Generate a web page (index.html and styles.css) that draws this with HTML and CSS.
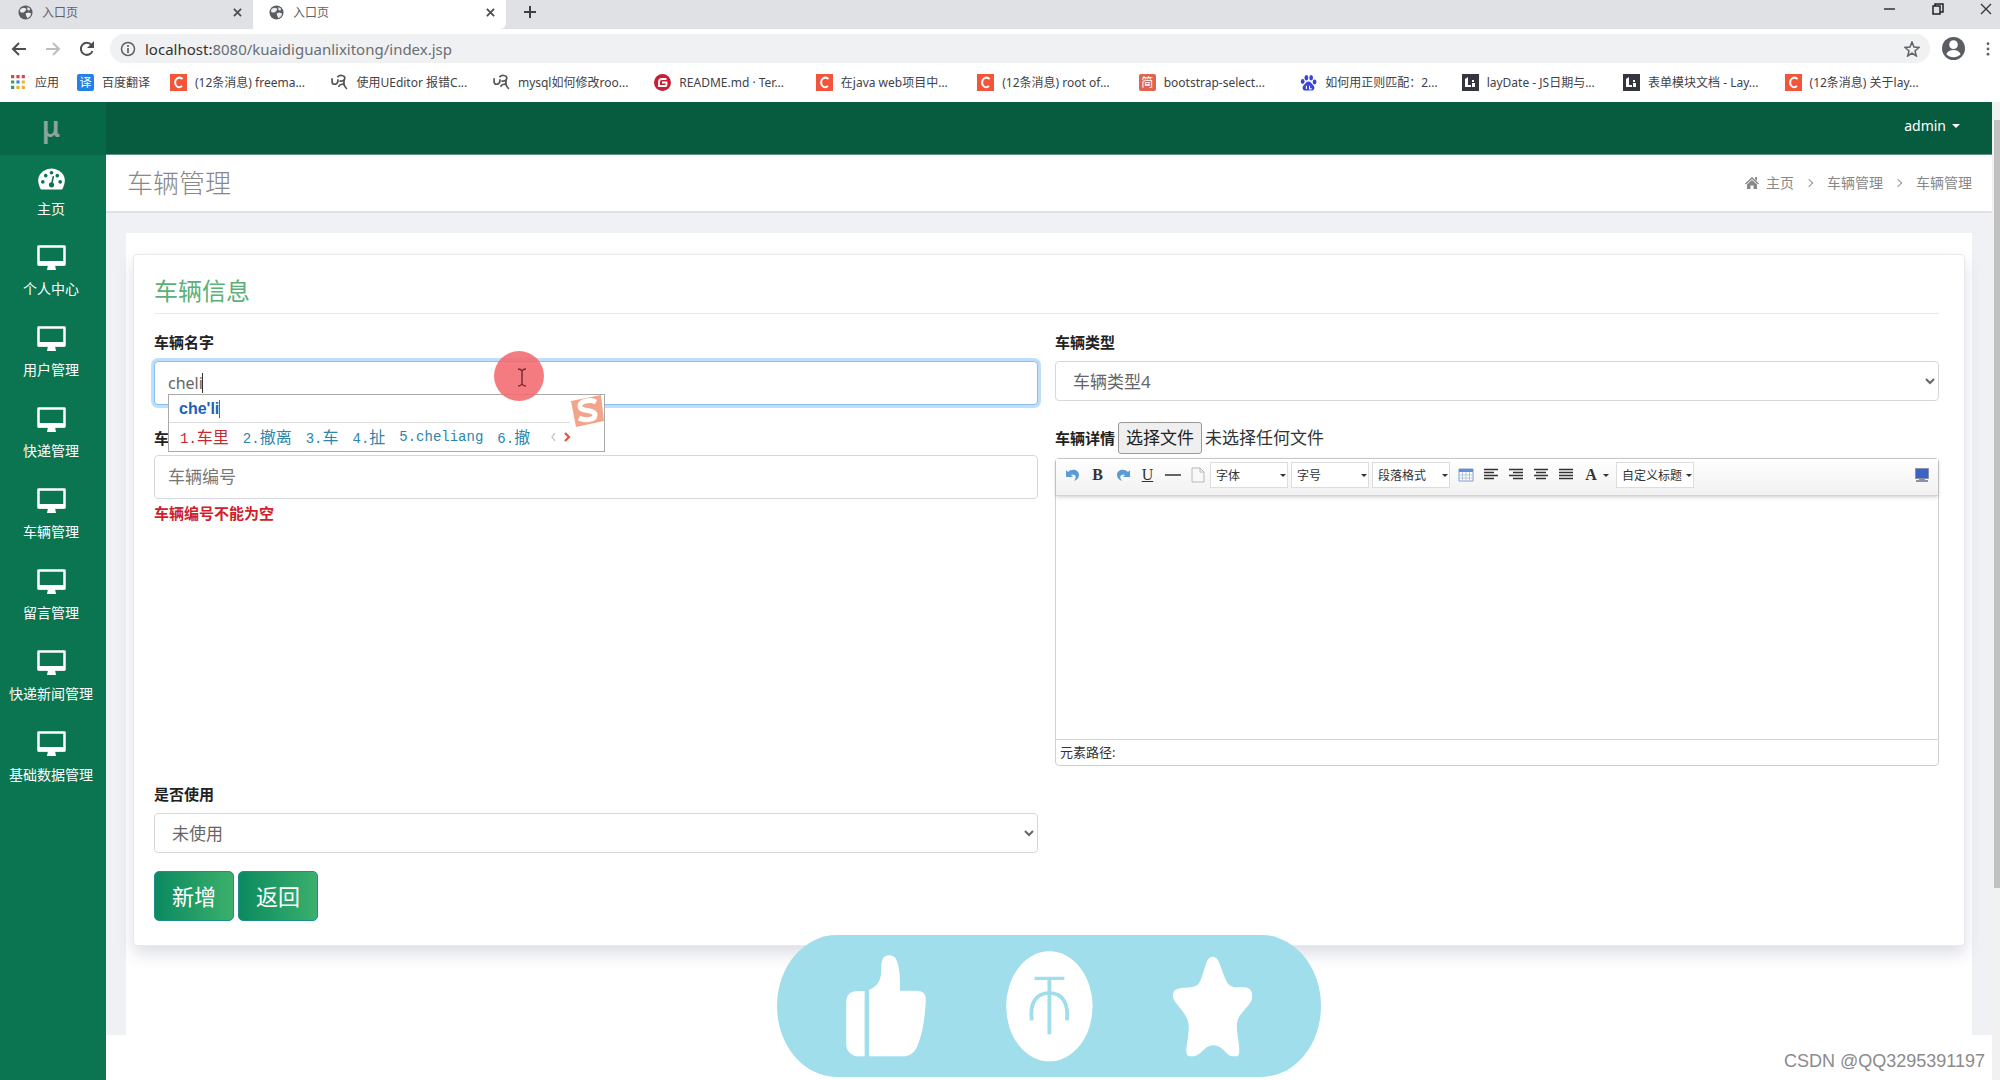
FILE: index.html
```
<!DOCTYPE html>
<html lang="zh-CN">
<head>
<meta charset="utf-8">
<title>入口页</title>
<link rel="stylesheet" href="styles.css">
</head>
<body>
<svg class="defs" aria-hidden="true">
  <symbol id="globe" viewBox="0 0 16 16"><circle cx="8" cy="8" r="7.5" fill="#5a5d61"/><path d="M3 4 6 3 9 4 8 6 6 8 3 8 2 6zM8 9l3-1 3 1-1 3-3 2-1-2zM10 2l3 2-1 2-2-1z" fill="#eee"/></symbol>
  <symbol id="x" viewBox="0 0 10 10"><path d="M1 1 9 9M9 1 1 9" stroke="#4b4e52" stroke-width="2"/></symbol>
  <symbol id="csdn" viewBox="0 0 17 17"><path fill="#f2553a" d="M0 0h17v17H0z"/><path d="M12.500 5C11 3.500 8.500 3.500 7 4.500 4.500 6 4.500 11 7 12.500c1.500 1 3.500.8 5-.5" fill="none" stroke="#fff" stroke-width="2"/></symbol>
  <symbol id="ua" viewBox="0 0 16 16"><path d="M1 4v3c0 3.500 4.500 3.500 5.500 0V5M6 3c2-2.500 7-2 7 1 0 2.500-3 3-5 2.500M12.500 5c-1 4 0 7 2.500 9M7 12c2-3 4.500-3 6-1" fill="none" stroke="#555" stroke-width="1.600"/></symbol>
  <symbol id="lay" viewBox="0 0 17 17"><path fill="#34363d" d="M0 0h17v17H0z"/><path d="M3 5l3-2v8h3v2H3zM10 6h2v2h-2zM10 9h3v4h-3z" fill="#fff"/></symbol>
  <symbol id="monitor" viewBox="0 0 29 25"><path d="M1.500 1.500h26v18h-26z" fill="none" stroke="#fff" stroke-width="2.500" stroke-linejoin="round"/><path d="M1 16h27v4.500H1zM11 20h7l1 5h-9z" fill="#fff"/></symbol>
  <symbol id="undo" viewBox="0 0 16 16"><path d="M1 3l2 2c4-4 11-2 11 3 0 3-2 5-5 6 3-4 2-7-3-6l2 2H1z" fill="#5b9bd5"/></symbol>
</svg>

<div class="tabs">
  <div class="tab"><svg><use href="#globe"/></svg><span>入口页</span><button aria-label="关闭"><svg><use href="#x"/></svg></button></div>
  <div class="tab active"><svg><use href="#globe"/></svg><span>入口页</span><button aria-label="关闭"><svg><use href="#x"/></svg></button></div>
  <button class="newtab" aria-label="新标签页"><svg viewBox="0 0 12 12"><path d="M6 0v12M0 6h12" stroke="#3c4043" stroke-width="2"/></svg></button>
  <div class="winctl">
    <button aria-label="最小化"><svg viewBox="0 0 12 12"><path d="M0 6h11" stroke="#333" stroke-width="1.500"/></svg></button>
    <button aria-label="还原"><svg viewBox="0 0 12 12"><path d="M1 3h7v8H1zM3 3V1h8v8H8" fill="none" stroke="#222" stroke-width="1.500"/></svg></button>
    <button aria-label="关闭窗口"><svg viewBox="0 0 12 12"><path d="M1 1l10 10M11 1 1 11" stroke="#333" stroke-width="1.300"/></svg></button>
  </div>
</div>

<div class="toolbar">
  <button aria-label="后退"><svg viewBox="0 0 16 16"><path d="M15 8H2M8 2 2 8l6 6" fill="none" stroke="#4b4e52" stroke-width="2"/></svg></button>
  <button aria-label="前进"><svg viewBox="0 0 16 16"><path d="M1 8h13M8 2l6 6-6 6" fill="none" stroke="#bcbec1" stroke-width="2"/></svg></button>
  <button aria-label="刷新"><svg viewBox="0 0 16 16"><path d="M13.500 10A6 6 0 1 1 12.500 4" fill="none" stroke="#4b4e52" stroke-width="2"/><path d="M15 0v7H8z" fill="#4b4e52"/></svg></button>
  <div class="omnibox">
    <svg viewBox="0 0 16 16"><circle cx="8" cy="8" r="6.500" fill="none" stroke="#5f6368" stroke-width="1.500"/><path d="M8 7v5M8 4v2" stroke="#5f6368" stroke-width="1.700"/></svg>
    <span><b>localhost:</b>8080/kuaidiguanlixitong/index.jsp</span>
    <svg class="fav" viewBox="0 0 16 16"><path d="M8 1l2 5 5 .5-4 3.500 1.300 5L8 12.200 3.700 15 5 10 1 6.500 6 6z" fill="none" stroke="#5f6368" stroke-width="1.500"/></svg>
  </div>
  <svg class="avatar" viewBox="0 0 24 24"><circle cx="12" cy="12" r="12" fill="#5a5d61"/><circle cx="12" cy="8" r="4.500" fill="#fff"/><path d="M4.500 18c2-6 13-6 15 0-4 4-11 4-15 0z" fill="#fff"/></svg>
  <svg class="dots" viewBox="0 0 4 16"><circle cx="2" cy="2" r="1.600"/><circle cx="2" cy="8" r="1.600"/><circle cx="2" cy="14" r="1.600"/></svg>
</div>

<nav class="bookmarks">
  <a href="#" class="apps"><svg viewBox="0 0 16 16"><path fill="#d9463e" d="M1 1h3v3H1zM6 1h3v3H6zM11 1h3v3h-3z"/><path fill="#3b9a5a" d="M1 6h3v3H1zM1 11h3v3H1z"/><path fill="#4284e8" d="M6 6h3v3H6z"/><path fill="#eab331" d="M11 6h3v3h-3zM6 11h3v3H6zM11 11h3v3h-3z"/></svg>应用</a>
  <a href="#" class="trans"><i class="badge blue">译</i>百度翻译</a>
  <a href="#"><svg><use href="#csdn"/></svg>(12条消息) freema...</a>
  <a href="#"><svg><use href="#ua"/></svg>使用UEditor 报错C...</a>
  <a href="#"><svg><use href="#ua"/></svg>mysql如何修改roo...</a>
  <a href="#"><svg viewBox="0 0 17 17"><circle cx="8.500" cy="8.500" r="8.500" fill="#c71d37"/><path d="M12.500 5H8C6 5 5 6 5 8v4h6.500c.7 0 1-.5 1-1V8.500H8" fill="none" stroke="#fff" stroke-width="1.800"/></svg>README.md · Ter...</a>
  <a href="#"><svg><use href="#csdn"/></svg>在java web项目中...</a>
  <a href="#"><svg><use href="#csdn"/></svg>(12条消息) root of...</a>
  <a href="#"><i class="badge red">简</i>bootstrap-select...</a>
  <a href="#"><svg viewBox="0 0 16 16" fill="#3a45d8"><ellipse cx="2.500" cy="7" rx="1.800" ry="2.300"/><ellipse cx="6" cy="3.500" rx="1.800" ry="2.500"/><ellipse cx="10.500" cy="3.500" rx="1.800" ry="2.500"/><ellipse cx="13.700" cy="7.500" rx="1.800" ry="2.300"/><path d="M8 7c2 0 3 2 4.500 3.500 2 2 1 5-1.500 5H5c-2.500 0-3.500-3-1.500-5C5 9 6 7 8 7z"/><path d="M6 11v3M9 11v3h2" stroke="#fff" fill="none"/></svg>如何用正则匹配：2...</a>
  <a href="#"><svg><use href="#lay"/></svg>layDate - JS日期与...</a>
  <a href="#"><svg><use href="#lay"/></svg>表单模块文档 - Lay...</a>
  <a href="#"><svg><use href="#csdn"/></svg>(12条消息) 关于lay...</a>
</nav>

<div class="app">
  <aside class="side">
    <div class="logo">μ</div>
    <a href="#" class="home"><svg viewBox="0 0 28 22"><path d="M3 22C-6 5 9 0 14 0s20 5 11 22z" fill="#fff"/><g fill="#0b7551"><circle cx="5" cy="14" r="1.900"/><circle cx="8" cy="7.500" r="1.900"/><circle cx="14" cy="4.500" r="1.900"/><circle cx="20" cy="7.500" r="1.900"/><circle cx="23" cy="14" r="1.900"/><circle cx="14" cy="17" r="2.700"/></g><path d="M14 17l2-9" stroke="#0b7551" stroke-width="1.600"/></svg>主页</a>
    <a href="#"><svg><use href="#monitor"/></svg>个人中心</a>
    <a href="#"><svg><use href="#monitor"/></svg>用户管理</a>
    <a href="#"><svg><use href="#monitor"/></svg>快递管理</a>
    <a href="#"><svg><use href="#monitor"/></svg>车辆管理</a>
    <a href="#"><svg><use href="#monitor"/></svg>留言管理</a>
    <a href="#"><svg><use href="#monitor"/></svg>快递新闻管理</a>
    <a href="#"><svg><use href="#monitor"/></svg>基础数据管理</a>
  </aside>

  <main class="main">
    <header class="topbar"><button class="user">admin<i class="caret"></i></button></header>
    <div class="titlebar">
      <h1>车辆管理</h1>
      <nav class="crumbs">
        <a href="#"><svg viewBox="0 0 14 12"><path d="M7 0l7 6.500-1 1L7 2 1 7.500l-1-1zM2 7.500 7 3l5 4.500V12H8.500V8.500h-3V12H2zM10 0h2v4l-2-2z" fill="#888"/></svg>主页</a>
        <i></i><a href="#">车辆管理</a><i></i><span>车辆管理</span>
      </nav>
    </div>
    <div class="page">
      <div class="sheet">
        <form class="card">
          <h2>车辆信息</h2>
          <div class="grid">
            <div class="field">
              <label for="name">车辆名字</label>
              <div class="anchor">
                <input id="name" class="box focus" type="text" value="cheli">
                <i class="textcaret"></i>
                <div class="ime">
                  <div class="pinyin">che'li<i></i></div>
                  <div class="cands"><span class="on">1.<b>车里</b></span><span>2.<b>撤离</b></span><span>3.<b>车</b></span><span>4.<b>扯</b></span><span>5.cheliang</span><span>6.<b>撤</b></span><svg viewBox="0 0 22 12"><path d="M5 2 2 6l3 4" fill="none" stroke="#ccc" stroke-width="1.500"/><path d="m15 2 4 4-4 4" fill="none" stroke="#e0573a" stroke-width="2.200"/></svg></div>
                  <svg class="sogou" viewBox="0 0 34 32"><path d="M1 6 31 0l3 26-28 6z" fill="#f3a58b"/><path d="M26 7C20 4 9 6 10 12c1 5 15 2 15 8 0 5-10 6-16 3" fill="none" stroke="#fff" stroke-width="5"/></svg>
                </div>
                <svg class="pointer" viewBox="0 0 50 50"><circle cx="25" cy="25" r="25" fill="#f26a6e" fill-opacity=".88"/><path d="M24 18q3 0 4 2 1-2 4-2M28 20v13M24 35q3 0 4-2 1 2 4 2" fill="none" stroke="#7b2b36" stroke-width="1.500"/></svg>
              </div>
            </div>
            <div class="field">
              <label for="type">车辆类型</label>
              <select id="type" class="box"><option>车辆类型4</option></select>
            </div>
            <div class="field tall">
              <label for="no">车辆编号</label>
              <input id="no" class="box" type="text" placeholder="车辆编号">
              <p class="error">车辆编号不能为空</p>
            </div>
            <div class="field tall">
              <div class="filerow"><label for="file">车辆详情</label><label class="pick" for="file">选择文件</label><input id="file" type="file"><span>未选择任何文件</span></div>
              <div class="editor">
                <div class="tools">
                  <button type="button" aria-label="撤销"><svg><use href="#undo"/></svg></button>
                  <button type="button"><b>B</b></button>
                  <button type="button" aria-label="重做"><svg class="flip"><use href="#undo"/></svg></button>
                  <button type="button"><u>U</u></button>
                  <button type="button" aria-label="分隔线"><svg viewBox="0 0 16 16"><path d="M0 8h16" stroke="#333" stroke-width="1.500"/></svg></button>
                  <button type="button" aria-label="清空"><svg viewBox="0 0 16 16"><path d="M2 1h8l4 4v10H2zM10 1v4h4" fill="#f8f8f8" stroke="#b8b8b8"/></svg></button>
                  <button type="button" class="combo"><span>字体</span><i class="caret"></i></button>
                  <button type="button" class="combo"><span>字号</span><i class="caret"></i></button>
                  <button type="button" class="combo"><span>段落格式</span><i class="caret"></i></button>
                  <button type="button" aria-label="表格"><svg viewBox="0 0 16 16"><path d="M1 2h14v12H1z" fill="#fff" stroke="#7f9fce"/><path d="M1 2h14v3H1z" fill="#5f8fd6"/><path d="M1 8h14M1 11h14M4.500 5v9M8 5v9M11.500 5v9" stroke="#b4c5e0"/></svg></button>
                  <button type="button" aria-label="左对齐"><svg viewBox="0 0 16 16"><path d="M1 2.500h14M1 5.500h10M1 8.500h14M1 11.500h10" stroke="#333" stroke-width="1.300"/></svg></button>
                  <button type="button" aria-label="右对齐"><svg viewBox="0 0 16 16"><path d="M1 2.500h14M5 5.500h10M1 8.500h14M5 11.500h10" stroke="#333" stroke-width="1.300"/></svg></button>
                  <button type="button" aria-label="居中"><svg viewBox="0 0 16 16"><path d="M1 2.500h14M3 5.500h10M1 8.500h14M3 11.500h10" stroke="#333" stroke-width="1.300"/></svg></button>
                  <button type="button" aria-label="两端对齐"><svg viewBox="0 0 16 16"><path d="M1 2.500h14M1 5.500h14M1 8.500h14M1 11.500h14" stroke="#333" stroke-width="1.300"/></svg></button>
                  <button type="button" class="color"><b>A</b><i class="caret"></i></button>
                  <button type="button" class="combo"><span>自定义标题</span><i class="caret"></i></button>
                  <button type="button" class="full" aria-label="全屏"><svg viewBox="0 0 16 16"><path d="M1.500 1.500h13v10h-13z" fill="#3a62c8" stroke="#8a93a5"/><path d="M5 12h6v1h3v2H2v-2h3z" fill="#8a93a5"/></svg></button>
                </div>
                <div class="canvas" contenteditable="true" spellcheck="false"></div>
                <div class="path">元素路径:</div>
              </div>
            </div>
            <div class="field">
              <label for="used">是否使用</label>
              <select id="used" class="box"><option>未使用</option></select>
            </div>
          </div>
          <div class="actions"><button type="button">新增</button><button type="button">返回</button></div>
        </form>
      </div>
    </div>
    <div class="watermark">CSDN @QQ3295391197</div>
  </main>
  <div class="scroll"><i></i></div>
</div>

<svg class="pill" viewBox="45 104 1422 426" preserveAspectRatio="none">
  <rect x="45" y="104" width="1422" height="426" rx="156" ry="213" fill="#a0deec"/>
  <g fill="#fff">
    <path d="M274 272v196h-22c-14-3-26-18-26-36V304c0-20 12-32 30-32z"/>
    <path d="M286 268c22-8 30-30 31-50 1-14 0-30 4-42 7-15 28-14 35 0 8 18 12 50 10 95h43c16 0 25 8 25 26-2 55-8 100-20 134-8 24-18 34-34 37h-94z"/>
    <ellipse cx="757" cy="318" rx="113" ry="165"/>
    <path d="M1170 180c7-14 21-14 28 0 8 18 12 40 20 58 6 16 14 22 28 23h22c14 2 20 12 19 28 0 16-12 28-22 42-12 16-18 26-18 48 0 26 8 52 6 78-1 8-3 11-8 11h-10c-10-1-16-12-26-22-14-15-32-15-46 0-10 10-18 20-27 22h-12c-6-1-9-6-9-16 0-20 8-52 6-78-1-18-10-32-20-48-10-14-20-24-21-38 0-12 2-20 14-23 16-4 38-2 49-10 12-8 18-52 27-75z"/>
  </g>
  <path d="M718 234h78M757 234v168M711 360c-6-50 10-82 46-82s50 32 46 82" fill="none" stroke="#a0deec" stroke-width="10"/>
</svg>
</body>
</html>
```
FILE: styles.css
```
* { box-sizing: border-box; }
html { overflow: hidden; }
body {
  margin: 0;
  min-height: 100vh;
  display: flex;
  flex-direction: column;
  font: 14px/20px "Noto Sans", "Noto Sans CJK SC", sans-serif;
  color: #333;
  background: #fff;
}
button { border: 0; padding: 0; background: none; font: inherit; color: inherit; display: flex; align-items: center; justify-content: center; }
a { color: inherit; text-decoration: none; }
i { font-style: normal; }
h1, h2, p { margin: 0; }
svg { flex: none; display: block; }
.defs { display: none; }
.caret { border: 4px solid transparent; border-top-color: currentColor; border-bottom: 0; }

/* browser frame */
.tabs { display: flex; height: 29px; background: #dfe1e5; }
.tab { width: 253px; display: flex; align-items: center; gap: 9px; padding: 0 11px 4px 18px; font-size: 12px; color: #5f6368; }
.tab.active { background: #fff; border-radius: 0 0 6px 0; padding-left: 16px; }
.tab svg { width: 15px; height: 15px; }
.tab button { margin-left: auto; }
.tab button svg { width: 9px; height: 9px; }
.newtab { margin-left: 18px; padding-bottom: 6px; }
.newtab svg { width: 12px; height: 12px; }
.winctl { margin-left: auto; display: flex; gap: 36px; padding: 0 8px 11px 0; }
.winctl svg { width: 12px; height: 12px; }
.toolbar { display: flex; align-items: center; height: 39px; padding: 0 10px 0 11px; gap: 18px; }
.toolbar button svg { width: 16px; height: 16px; }
.omnibox { flex: 1; height: 29px; border-radius: 15px; background: #eff1f3; display: flex; align-items: center; gap: 9px; padding: 0 10px; margin-left: -3px; font-size: 15px; color: #6b6e72; }
.omnibox svg { width: 16px; height: 16px; }
.omnibox b { font-weight: 400; color: #333; }
.omnibox .fav { margin-left: auto; }
.avatar { width: 23px; height: 23px; margin: 0 3px 0 -6px; }
.dots { width: 4px; height: 14px; fill: #5f6368; }
.bookmarks { display: flex; height: 34px; padding: 0 54px 5px 10px; font-size: 12px; color: #3f4246; }
.bookmarks a { flex: 1 1 0; min-width: 0; display: flex; align-items: center; gap: 8px; white-space: nowrap; }
.bookmarks .apps { flex: 0 0 67px; }
.bookmarks .trans { flex: 0 0 93px; }
.bookmarks svg { width: 17px; height: 17px; }
.badge { width: 17px; height: 17px; border-radius: 2px; color: #fff; text-align: center; line-height: 17px; }
.blue { background: #2482e6; }
.red { background: #e0644f; }

/* application */
.app { flex: 1; display: flex; }
.side { width: 106px; background: #0b7551; color: #fff; padding-right: 4px; }
.logo { height: 53px; margin-right: -4px; padding-right: 4px; background: #076848; color: #8fa399; font-size: 28px; font-weight: 600; line-height: 48px; text-align: center; }
.side a { display: flex; flex-direction: column; align-items: center; gap: 9px; height: 81px; padding-top: 9px; white-space: nowrap; }
.side a.home { padding-top: 13px; }
.side svg { width: 29px; height: 25px; }
.side .home svg { height: 22px; width: 27px; }
.main { flex: 1; min-width: 0; display: flex; flex-direction: column; }
.topbar { height: 53px; background: #075c40; border-bottom: 1px solid #5f9581; color: #fff; display: flex; justify-content: flex-end; padding: 0 32px 5px 0; }
.user { gap: 6px; }
.titlebar { height: 58px; display: flex; align-items: center; justify-content: space-between; padding: 0 20px 0 21px; border-bottom: 2px solid #dfe1e4; color: #888; }
.titlebar h1 { font-size: 26px; line-height: 36px; font-weight: 300; }
.crumbs { display: flex; align-items: center; }
.crumbs a { display: flex; align-items: center; gap: 7px; }
.crumbs svg { width: 14px; height: 12px; }
.crumbs i { width: 6px; height: 6px; margin: 0 15px 0 12px; border: solid #999; border-width: 1px 1px 0 0; transform: rotate(45deg); }
.page { flex: 1; background: #f0f1f4; padding: 20px 20px 0; }
.sheet { height: 100%; background: #fff; padding: 21px 7px 0; }
.card { border: 1px solid #e8e9ec; border-radius: 4px; background: #fff; box-shadow: 0 8px 16px rgba(70, 80, 120, .18); padding: 20px 25px 24px 20px; }
.card h2 { font-size: 24px; line-height: 32px; font-weight: 400; color: #5cb078; padding-bottom: 6px; border-bottom: 1px solid #eaeaea; }
.grid { display: grid; grid-template-columns: 1fr 1fr; gap: 17px; padding: 17px 0 18px; }
.field label { display: block; font-size: 15px; line-height: 22px; font-weight: 600; color: #222; }
.box { display: block; width: 100%; border: 1px solid #d5d8db; border-radius: 4px; background: #fff; font: 17px/24px "Noto Sans", "Noto Sans CJK SC", sans-serif; color: #666; height: 40px; margin-top: 8px; outline: 0; }
input.box { height: 44px; padding: 0 13px; font-size: 16px; }
input.box::placeholder { color: #777; font-size: 17px; }
select.box { padding-left: 13px; }
.focus { border-color: #8abdf0; box-shadow: 0 0 0 3px #bfdefb; }
.tall label { line-height: 32px; }
.tall .box { margin-top: 1px; }
.error { color: #d0202a; font-size: 15px; line-height: 22px; font-weight: 600; padding-top: 3px; }
.filerow { position: relative; display: flex; align-items: center; gap: 3px; height: 32px; font-size: 17px; }
.filerow .pick { border: 1px solid #999; border-radius: 3px; background: #efefef; font-size: 17px; line-height: 30px; font-weight: 400; padding: 0 7px; }
.filerow input { position: absolute; left: 63px; width: 84px; height: 32px; opacity: 0; }
.editor { margin-top: 4px; border: 1px solid #d0d0d0; border-radius: 4px; }
.tools { height: 37px; display: flex; align-items: center; padding: 0 4px 4px; border-bottom: 1px solid #d4d4d4; box-shadow: 0 1px 4px rgba(0, 0, 0, .2); background: linear-gradient(#fff, #f1f1f1); color: #333; }
.tools button { width: 25px; height: 26px; font: 16px/20px "Liberation Serif", serif; }
.tools svg { width: 16px; height: 16px; }
.tools .flip { transform: scaleX(-1); }
.tools .combo { width: 78px; margin-right: 3px; border: 1px solid #ddd; background: #fff; font: 12px/20px "Noto Sans CJK SC", sans-serif; justify-content: space-between; padding: 0 0 0 5px; }
.combo span { max-width: 60px; overflow: hidden; white-space: nowrap; }
.combo .caret { border-width: 3px 3px 0; margin: 0 1px; }
.tools .color { width: 38px; gap: 6px; }
.color .caret { border-width: 3px 3px 0; }
.tools .full { margin-left: auto; }
.canvas { height: 243px; outline: 0; }
.path { border-top: 1px solid #d4d4d4; padding: 2px 4px 3px; font-size: 13px; line-height: 20px; }
.actions { display: flex; gap: 4px; }
.actions button { width: 80px; height: 50px; border: 1px solid #1b8f8c; border-radius: 5px; background: linear-gradient(90deg, #0b8a60, #3bb06c); color: #fff; font-size: 22px; line-height: 30px; }
.watermark { height: 45px; padding: 14px 7px 0; text-align: right; font: 18px/24px "Liberation Sans", sans-serif; color: #8b8b8b; }
.scroll { width: 8px; background: #f1f1f1; padding: 18px 0 0 2px; }
.scroll i { display: block; height: 80%; background: #c1c1c1; }

/* overlays */
.anchor { position: relative; }
.textcaret { position: absolute; left: 48px; top: 12px; width: 1px; height: 20px; background: #333; }
.ime { position: absolute; z-index: 1; left: 14px; top: 33px; width: 437px; height: 58px; border: 1px solid #aaa; background: #fff; }
.pinyin { height: 28px; margin-right: 34px; padding-left: 10px; border-bottom: 1px solid #ddd; display: flex; align-items: center; font: bold 16px/24px "Liberation Sans", sans-serif; color: #1b62b5; }
.pinyin i { width: 1px; height: 18px; background: #d33; }
.cands { display: flex; align-items: center; gap: 14px; height: 28px; padding-left: 11px; font: 14px/24px "Liberation Mono", monospace; color: #2b86ad; }
.cands b { font: 16px/24px "Noto Sans CJK SC", sans-serif; }
.cands .on { color: #c62a30; }
.cands svg { width: 22px; height: 12px; margin-left: 6px; }
.sogou { position: absolute; right: 0; top: 0; width: 34px; height: 32px; }
.pointer { position: absolute; z-index: 2; left: 340px; top: -10px; width: 50px; height: 50px; }
.pill { position: fixed; left: 777px; bottom: 3px; width: 544px; height: 142px; z-index: 3; }
```
